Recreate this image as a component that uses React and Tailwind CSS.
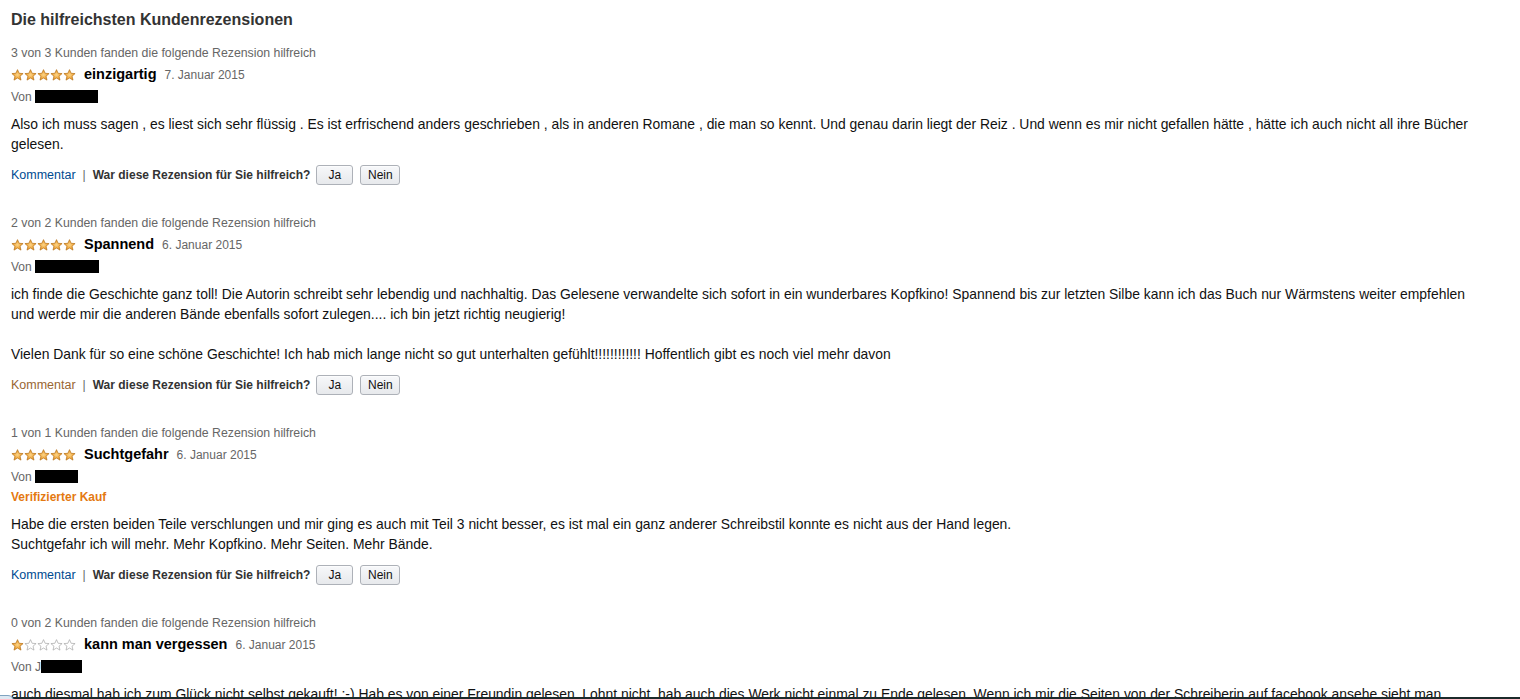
const reviews = [
  {
    helpful: '3 von 3 Kunden fanden die folgende Rezension hilfreich',
    stars: 5,
    title: 'einzigartig',
    date: '7. Januar 2015',
    author: '',
    box: 'w-[63px]',
    verified: false,
    visited: false,
    body: [
      'Also ich muss sagen , es liest sich sehr flüssig . Es ist erfrischend anders geschrieben , als in anderen Romane , die man so kennt. Und genau darin liegt der Reiz . Und wenn es mir nicht gefallen hätte , hätte ich auch nicht all ihre Bücher gelesen.',
    ],
  },
  {
    helpful: '2 von 2 Kunden fanden die folgende Rezension hilfreich',
    stars: 5,
    title: 'Spannend',
    date: '6. Januar 2015',
    author: '',
    box: 'w-[64px]',
    verified: false,
    visited: true,
    body: [
      'ich finde die Geschichte ganz toll! Die Autorin schreibt sehr lebendig und nachhaltig. Das Gelesene verwandelte sich sofort in ein wunderbares Kopfkino! Spannend bis zur letzten Silbe kann ich das Buch nur Wärmstens weiter empfehlen und\u00a0werde mir die anderen Bände ebenfalls sofort zulegen.... ich bin jetzt richtig neugierig!',
      'Vielen Dank für so eine schöne Geschichte! Ich hab mich lange nicht so gut unterhalten gefühlt!!!!!!!!!!!! Hoffentlich gibt es noch viel mehr davon',
    ],
  },
  {
    helpful: '1 von 1 Kunden fanden die folgende Rezension hilfreich',
    stars: 5,
    title: 'Suchtgefahr',
    date: '6. Januar 2015',
    author: '',
    box: 'w-[43px]',
    verified: true,
    visited: false,
    body: [
      'Habe die ersten beiden Teile verschlungen und mir ging es auch mit Teil 3 nicht besser, es ist mal ein ganz anderer Schreibstil konnte es nicht aus der Hand legen.\nSuchtgefahr ich will mehr. Mehr Kopfkino. Mehr Seiten. Mehr Bände.',
    ],
  },
  {
    helpful: '0 von 2 Kunden fanden die folgende Rezension hilfreich',
    stars: 1,
    title: 'kann man vergessen',
    date: '6. Januar 2015',
    author: 'J',
    box: 'w-[41px]',
    verified: false,
    visited: false,
    body: [
      'auch diesmal hab ich zum Glück nicht selbst gekauft! :-) Hab es von einer Freundin gelesen. Lohnt nicht, hab auch dies Werk nicht einmal zu Ende gelesen. Wenn ich mir die Seiten von der Schreiberin auf facebook ansehe sieht man schnell,\u00a0dass hier nur eine Masche abgezogen wird.',
    ],
  },
];

const Star = ({ filled, id }) => (
  <svg width="13" height="12" viewBox="0 0 24 23" className="block">
    <defs>
      <radialGradient id={id} cx="50%" cy="50%" r="60%">
        <stop offset="0%" stopColor="#fbd58a" />
        <stop offset="60%" stopColor="#f0a53a" />
        <stop offset="100%" stopColor="#c77a17" />
      </radialGradient>
    </defs>
    <path
      d="M12 1.2l3.1 7 7.6.6-5.8 5 1.8 7.5L12 17.3l-6.7 4 1.8-7.5-5.8-5 7.6-.6z"
      fill={filled ? `url(#${id})` : '#ffffff'}
      stroke={filled ? '#b8741a' : '#a8a8a8'}
      strokeWidth="1.4"
      strokeLinejoin="round"
    />
  </svg>
);

const Stars = ({ count, idx }) => (
  <div className="flex items-center">
    {[0, 1, 2, 3, 4].map((i) => (
      <Star key={i} filled={i < count} id={`st-${idx}-${i}`} />
    ))}
  </div>
);

const Button = ({ children, w }) => (
  <button
    className={`${w} h-[20px] rounded-[3px] border border-[#adb1b8] bg-gradient-to-b from-[#f7f8fa] to-[#e7e9ec] text-[12px] leading-none text-[#111] shadow-[0_1px_0_rgba(255,255,255,0.6)_inset]`}
  >
    {children}
  </button>
);

const Review = ({ r, idx }) => (
  <div className="mb-[27px]">
    <div className="h-[22px] text-[12.3px] leading-[22px] text-[#666]">{r.helpful}</div>
    <div className="flex h-[22px] items-center">
      <Stars count={r.stars} idx={idx} />
      <span className="ml-[8px] text-[14.5px] font-bold text-black">{r.title}</span>
      <span className="ml-[8px] text-[12px] text-[#666]">{r.date}</span>
    </div>
    <div className="flex h-[21px] items-center text-[12px] text-[#666]">
      <span>Von&nbsp;</span>
      {r.author && <span>{r.author}</span>}
      <span className={`inline-block h-[13px] bg-black ${r.box}`} />
    </div>
    {r.verified && (
      <div className="h-[20px] text-[12px] font-bold leading-[20px] text-[#e47911]">Verifizierter Kauf</div>
    )}
    <div className="mt-[7px] flex flex-col gap-[20px] whitespace-pre-line text-[13.9px] leading-[20px] text-[#111]">
      {r.body.map((p, i) => (
        <p key={i}>{p}</p>
      ))}
    </div>
    <div className="mt-[11px] flex h-[20px] items-center text-[12px]">
      <span className={`text-[12.5px] ${r.visited ? 'text-[#996633]' : 'text-[#004b91]'}`}>Kommentar</span>
      <span className="mx-[7px] text-[#666]">|</span>
      <span className="font-bold text-[#333]">War diese Rezension für Sie hilfreich?</span>
      <div className="ml-[6px] flex gap-[7px]">
        <Button w="w-[37px]">Ja</Button>
        <Button w="w-[40px]">Nein</Button>
      </div>
    </div>
  </div>
);

export default function App() {
  return (
    <div className="relative h-[699px] w-full overflow-hidden bg-white font-['Liberation_Sans',Arial,sans-serif]">
      <div className="px-[11px] pr-[16px] pt-[9px]">
        <h2 className="mb-[11px] text-[16px] font-bold leading-[22px] text-[#333]">Die hilfreichsten Kundenrezensionen</h2>
        {reviews.map((r, i) => (
          <Review key={i} r={r} idx={i} />
        ))}
      </div>
      <div className="absolute bottom-0 left-0 h-[2px] w-full bg-[#1b2a2a]" />
      <div className="absolute bottom-[-8px] left-[-6px] h-[12px] w-[20px] rounded-full border border-[#7fa3c0] bg-[#dce8f2]" />
    </div>
  );
}
